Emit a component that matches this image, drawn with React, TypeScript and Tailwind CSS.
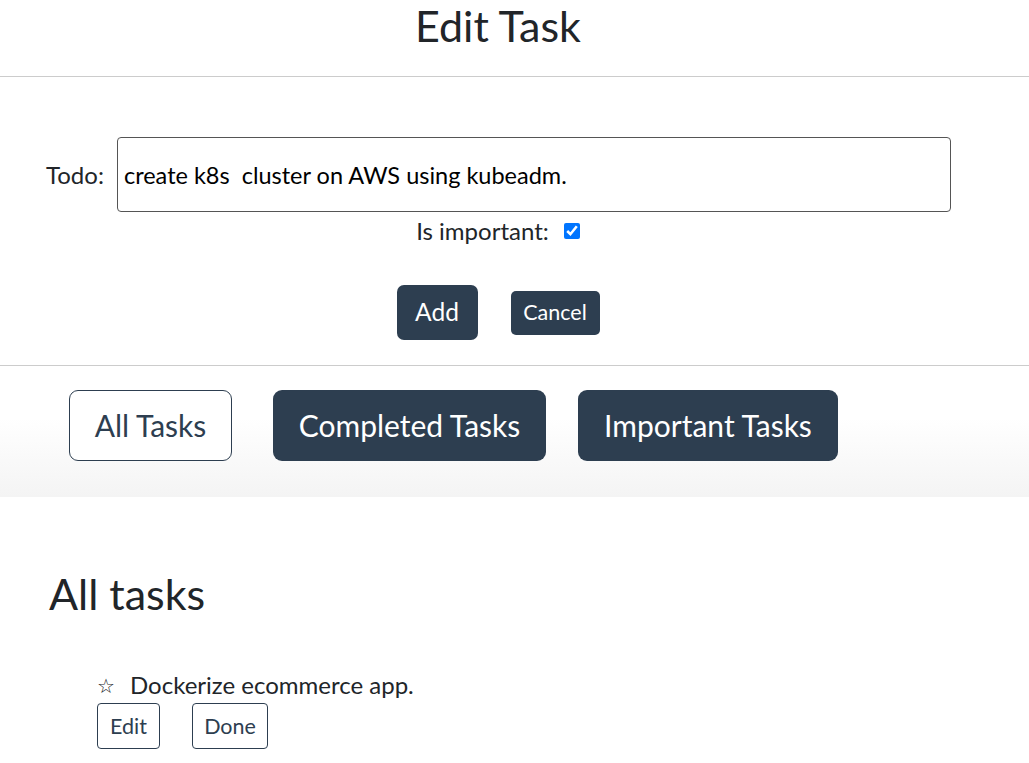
import React from 'react';

const font = { fontFamily: 'Lato, "Noto Sans", sans-serif' };

export default function App() {
  return (
    <div className="min-h-[763px] bg-white text-[#212529]" style={font}>
      <h1 className="text-center pr-[33px] text-[43px] leading-[52px] font-normal">Edit Task</h1>
      <hr className="mt-6 border-t border-[#cccccc]" />

      <form className="flex flex-col items-center pr-[33px] pt-[60px] pb-[25px]">
        <div className="flex items-center w-full pl-[46px]">
          <label className="text-[24px] mr-[13px]">Todo:</label>
          <input
            className="w-[834px] h-[75px] border border-[#555] rounded-[4px] px-[6px] text-[23.5px] text-black outline-none"
            defaultValue="create k8s  cluster on AWS using kubeadm."
          />
        </div>
        <div className="flex items-center mt-[4px] leading-[30px]">
          <span className="text-[24px] mr-[15px]">Is important:</span>
          <input type="checkbox" defaultChecked className="w-[16px] h-[16px] accent-[#0075ff]" />
        </div>
        <div className="flex items-center gap-[33px] mt-[39px]">
          <button type="button" className="w-[81px] h-[55px] rounded-[7px] bg-[#2d3e50] text-white text-[24.5px]">Add</button>
          <button type="button" className="w-[89px] h-[44px] rounded-[5px] bg-[#2d3e50] text-white text-[21.5px]">Cancel</button>
        </div>
      </form>

      <hr className="border-t border-[#cccccc]" />
      <div className="flex items-center pl-[69px] pt-6 pb-9 bg-gradient-to-b from-white from-40% to-[#f4f4f4]">
        <button className="w-[163px] h-[71px] rounded-[9px] border border-[#2d3e50] bg-white text-[30px] text-[#2d3e50]">All Tasks</button>
        <button className="ml-[41px] w-[273px] h-[71px] rounded-[9px] bg-[#2d3e50] text-white text-[30px]">Completed Tasks</button>
        <button className="ml-[32px] w-[260px] h-[71px] rounded-[9px] bg-[#2d3e50] text-white text-[30px]">Important Tasks</button>
      </div>

      <div className="pl-[49px] pt-[71px]">
        <h2 className="text-[43px] leading-[52px]">All tasks</h2>
        <div className="pl-[48px] mt-[51px]">
          <div className="flex items-center text-[24px] leading-[28px]">
            <span className="text-[20px] mr-[15px]">☆</span>
            <span>Dockerize ecommerce app.</span>
          </div>
          <div className="flex gap-[32px] mt-[4px]">
            <button className="w-[63px] h-[46px] rounded-[4px] border border-[#2d3e50] text-[21.5px] text-[#2d3e50]">Edit</button>
            <button className="w-[76px] h-[46px] rounded-[4px] border border-[#2d3e50] text-[21.5px] text-[#2d3e50]">Done</button>
          </div>
        </div>
      </div>
    </div>
  );
}
